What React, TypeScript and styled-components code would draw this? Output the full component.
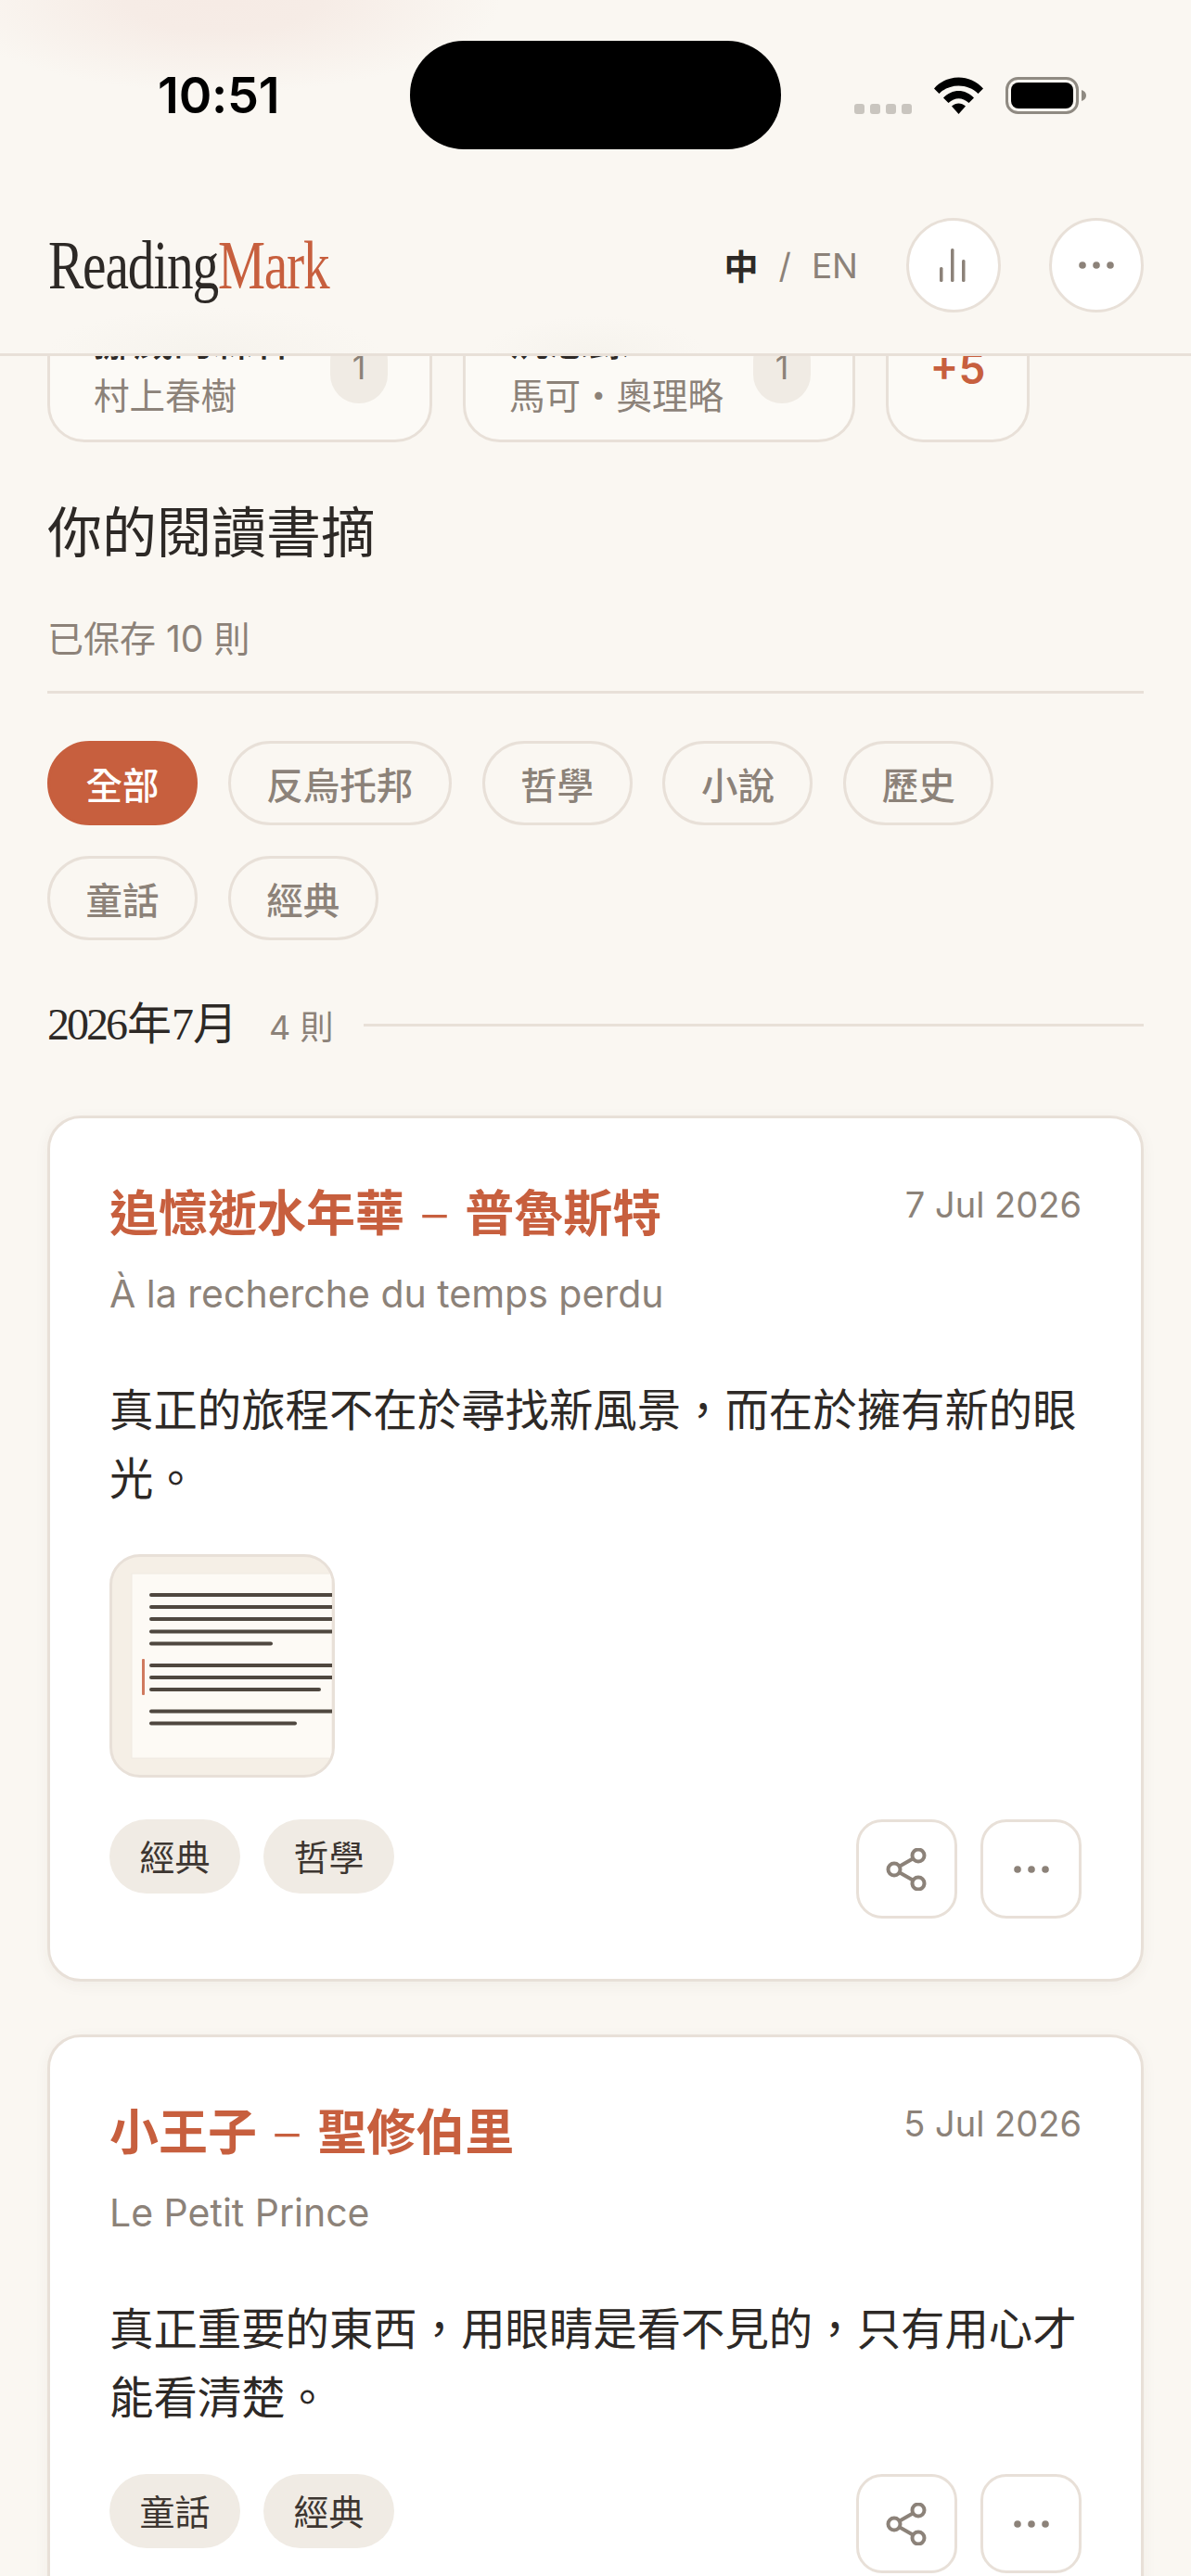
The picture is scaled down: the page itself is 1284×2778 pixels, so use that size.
import React from "react";
import styled, { createGlobalStyle } from "styled-components";

const SANS = `Inter, "Noto Sans CJK TC", "Noto Sans CJK JP", sans-serif`;
const SERIF = `"Liberation Serif", "Noto Sans CJK TC", serif`;
const INK = "#2d2926";
const MUTED = "#8c8279";
const ACCENT = "#c75f3e";
const LINE = "#e8e0d8";

const Global = createGlobalStyle`
  html, body { margin: 0; padding: 0; background: #faf7f2; }
  body { font-family: ${SANS}; color: ${INK}; }
  * { box-sizing: border-box; }
`;

const Page = styled.div`
  position: relative;
  width: 1284px;
  height: 2778px;
  overflow: hidden;
  background: #faf7f2;
`;

const Header = styled.header`
  position: absolute;
  top: 0;
  left: 0;
  right: 0;
  z-index: 2;
  height: 384px;
  padding-top: 44px;
  border-bottom: 3px solid ${LINE};
  background:
    radial-gradient(ellipse 300px 100px at 240px 0px, #f6ebe5 0%, #f6ece6 35%, rgba(246, 235, 229, 0) 100%),
    radial-gradient(ellipse 180px 50px at 230px 381px, #f6f3ed 0%, rgba(246, 243, 237, 0) 100%),
    radial-gradient(ellipse 120px 40px at 640px 381px, #f6f3ed 0%, rgba(246, 243, 237, 0) 100%),
    #faf7f2;
`;

const StatusBar = styled.div`
  display: flex;
  align-items: center;
  height: 117px;
`;

const Time = styled.div`
  width: 442px;
  padding-left: 170px;
  font-size: 54px;
  font-weight: 600;
  letter-spacing: -0.2px;
  color: #000;
`;

const Island = styled.div`
  width: 400px;
  height: 117px;
  border-radius: 58px;
  background: #000;
`;

const StatusIcons = styled.div`
  display: flex;
  align-items: center;
  gap: 24px;
  margin-left: 79px;
`;

const Signal = styled.div`
  display: flex;
  gap: 6px;
  margin-top: 30px;
`;

const SignalDot = styled.span`
  width: 11px;
  height: 11px;
  border-radius: 3px;
  background: #c9c5bf;
`;

const NavRow = styled.div`
  display: flex;
  align-items: center;
  height: 102px;
  margin-top: 74px;
  padding: 0 51px 0 52px;
`;

const Logo = styled.div`
  font-family: ${SERIF};
  font-size: 74px;
  line-height: 102px;
  letter-spacing: -1.5px;
  color: ${INK};
  white-space: nowrap;
  transform: scaleX(0.775);
  transform-origin: left center;
`;

const LogoAccent = styled.span`
  color: ${ACCENT};
`;

const NavRight = styled.div`
  display: flex;
  align-items: center;
  margin-left: auto;
`;

const Lang = styled.div`
  display: flex;
  align-items: center;
  gap: 22px;
  margin-right: 52px;
  font-size: 37px;
  color: ${MUTED};
`;

const LangActive = styled.span`
  font-weight: 700;
  color: ${INK};
`;

const RoundButton = styled.button<{ $gap?: number }>`
  display: flex;
  align-items: center;
  justify-content: center;
  width: 102px;
  height: 102px;
  margin-left: ${(p) => p.$gap ?? 0}px;
  padding: 0;
  border: 3px solid ${LINE};
  border-radius: 50%;
  background: #fff;
`;

const Main = styled.main`
  padding: 311px 51px 0;
`;

const AuthorStrip = styled.div`
  display: flex;
  gap: 33px;
`;

const AuthorCard = styled.div<{ $width: number }>`
  display: flex;
  align-items: center;
  justify-content: space-between;
  width: ${(p) => p.$width}px;
  height: 166px;
  padding: 4px 45px 0 47px;
  border: 3px solid ${LINE};
  border-radius: 40px;
  background: #fcfaf6;
`;

const AuthorText = styled.div`
  display: flex;
  flex-direction: column;
  gap: 6px;
`;

const AuthorBook = styled.div`
  font-size: 43px;
  line-height: 56px;
  font-weight: 500;
  color: ${INK};
`;

const AuthorName = styled.div`
  font-size: 38.5px;
  line-height: 50px;
  color: ${MUTED};
`;

const CountBadge = styled.div`
  display: flex;
  align-items: center;
  justify-content: center;
  width: 62px;
  height: 78px;
  border-radius: 31px;
  background: #f0ebe4;
  font-size: 36px;
  color: ${MUTED};
`;

const MoreCard = styled.div`
  display: flex;
  align-items: center;
  justify-content: center;
  width: 155px;
  height: 166px;
  padding-top: 6px;
  border: 3px solid ${LINE};
  border-radius: 40px;
  background: #fcfaf6;
  font-size: 46px;
  font-weight: 600;
  color: ${ACCENT};
`;

const PageTitle = styled.h1`
  margin: 58px 0 0;
  font-size: 59px;
  line-height: 80px;
  font-weight: 400;
  color: ${INK};
`;

const SavedCount = styled.div`
  margin-top: 49px;
  padding-bottom: 31px;
  border-bottom: 3px solid ${LINE};
  font-size: 39px;
  line-height: 50px;
  color: ${MUTED};
`;

const Filters = styled.div`
  display: flex;
  flex-wrap: wrap;
  gap: 33px 32.8px;
  margin-top: 51px;
  width: 1100px;
`;

const FilterPill = styled.button<{ $active?: boolean }>`
  height: 91px;
  padding: 0 38.5px;
  border: 3px solid ${(p) => (p.$active ? ACCENT : LINE)};
  border-radius: 46px;
  background: ${(p) => (p.$active ? ACCENT : "transparent")};
  color: ${(p) => (p.$active ? "#fff" : MUTED)};
  font-family: ${SANS};
  font-size: 39.5px;
  font-weight: 500;
`;

const MonthRow = styled.div`
  display: flex;
  align-items: center;
  height: 60px;
  margin-top: 61px;
`;

const MonthLabel = styled.div`
  font-family: ${SERIF};
  font-size: 48px;
  line-height: 60px;
  color: ${INK};
`;

const Digits = styled.span`
  letter-spacing: -3px;
  margin-right: 2px;
`;

const MonthCount = styled.div`
  margin-left: 34px;
  font-size: 36px;
  color: ${MUTED};
`;

const MonthLine = styled.div`
  flex: 1;
  height: 3px;
  margin-left: 33px;
  background: ${LINE};
`;

const NoteList = styled.div`
  display: flex;
  flex-direction: column;
  gap: 57px;
  margin-top: 68px;
`;

const NoteCard = styled.article`
  padding: 67px 64px 65px;
  border: 3px solid ${LINE};
  border-radius: 36px;
  background: #fff;
  box-shadow: 0 4px 16px rgba(70, 50, 30, 0.05);
`;

const NoteHead = styled.div`
  display: flex;
  justify-content: space-between;
  align-items: flex-start;
`;

const NoteTitle = styled.h2`
  margin: 0;
  font-size: 53px;
  line-height: 72px;
  font-weight: 600;
  color: ${ACCENT};
`;

const Dash = styled.span`
  margin: 0 6px;
  font-weight: 300;
`;

const NoteDate = styled.div`
  margin-top: -2px;
  font-size: 38px;
  line-height: 56px;
  color: ${MUTED};
`;

const NoteSub = styled.div`
  margin-top: 22px;
  font-size: 41px;
  line-height: 56px;
  color: ${MUTED};
`;

const Quote = styled.p`
  margin: 61px 0 0;
  font-size: 47.4px;
  line-height: 74px;
  color: ${INK};
`;

const Thumb = styled.div`
  width: 243px;
  height: 241px;
  margin-top: 44px;
  border: 3px solid ${LINE};
  border-radius: 33px;
  background: #f5efe6;
  overflow: hidden;
`;

const NoteFoot = styled.div<{ $gap: number }>`
  display: flex;
  justify-content: space-between;
  align-items: flex-start;
  margin-top: ${(p) => p.$gap}px;
`;

const Tags = styled.div`
  display: flex;
  gap: 25px;
`;

const Tag = styled.span`
  display: flex;
  align-items: center;
  height: 80px;
  padding: 0 32.5px 4px;
  border-radius: 40px;
  background: #f0ebe4;
  font-size: 38px;
  color: #3d3631;
`;

const Actions = styled.div`
  display: flex;
  gap: 25px;
`;

const ActionButton = styled.button`
  display: flex;
  align-items: center;
  justify-content: center;
  width: 109px;
  height: 107px;
  padding: 0;
  border: 3px solid ${LINE};
  border-radius: 28px;
  background: #fff;
`;

const Wifi = () => (
  <svg width="53" height="40" viewBox="0 0 53 40" fill="#000">
    <path d="M0 12.5C14-3.5 39-3.5 53 12.5L47.5 18C36.5 6.5 16.5 6.5 5.5 18Z" />
    <path d="M10 22.5C19.5 12.5 33.5 12.5 43 22.5L37.5 28C30.5 21.5 22.5 21.5 15.5 28Z" />
    <path d="M19 31.5C23.5 27.5 29.5 27.5 34 31.5L26.5 40Z" />
  </svg>
);

const Battery = () => (
  <svg width="87" height="40" viewBox="0 0 87 40">
    <rect x="1.5" y="1.5" width="76" height="37" rx="12" fill="none" stroke="#8f8a82" strokeWidth="3" />
    <rect x="6" y="6" width="67" height="28" rx="8" fill="#000" />
    <path d="M82 14c3 1 5 3 5 6s-2 5-5 6Z" fill="#8f8a82" />
  </svg>
);

const BarsIcon = () => (
  <svg width="30" height="36" viewBox="0 0 30 36" fill={MUTED}>
    <rect x="0" y="20" width="3.5" height="16" rx="1.5" />
    <rect x="12" y="0" width="3.5" height="36" rx="1.5" />
    <rect x="24" y="12" width="3.5" height="24" rx="1.5" />
  </svg>
);

const Dots = () => (
  <svg width="38" height="8" viewBox="0 0 38 8" fill={MUTED}>
    <circle cx="4" cy="4" r="3.8" />
    <circle cx="19" cy="4" r="3.8" />
    <circle cx="34" cy="4" r="3.8" />
  </svg>
);

const ShareIcon = () => (
  <svg width="46" height="46" viewBox="0 0 46 46" fill="none" stroke={MUTED} strokeWidth="4">
    <circle cx="35" cy="8" r="6.5" />
    <circle cx="9" cy="23" r="6.5" />
    <circle cx="35" cy="38" r="6.5" />
    <path d="M15 19.5 29 11.5M15 26.5 29 34.5" />
  </svg>
);

const PageThumb = () => {
  const lines: [number, number][] = [
    [80, 358], [93, 358], [106, 358], [119.5, 358], [132.5, 292],
    [156, 358], [169, 358], [182, 344], [205.5, 358], [218.5, 318],
  ];
  return (
    <svg width="237" height="235" viewBox="121 1679 237 235" style={{ display: "block" }}>
      <rect x="142" y="1697" width="216" height="199" fill="#fdfaf5" stroke="#f0eae2" strokeWidth="1" />
      {lines.map(([y, end]) => (
        <line key={y} x1="163" x2={end} y1={y + 1640} y2={y + 1640} stroke="#4f473f" strokeWidth="4" strokeLinecap="round" />
      ))}
      <rect x="153" y="1789" width="3" height="39" rx="1" fill="#d07a5f" />
    </svg>
  );
};

const filters = ["全部", "反烏托邦", "哲學", "小說", "歷史", "童話", "經典"];

const COMMA = "\uFF0C";
const quoteOne = `真正的旅程不在於尋找新風景${COMMA}而在於擁有新的眼光。`;
const quoteTwo = `真正重要的東西${COMMA}用眼睛是看不見的${COMMA}只有用心才能看清楚。`;

export default function App() {
  return (
    <Page>
      <Global />
      <Header>
        <StatusBar>
          <Time>10:51</Time>
          <Island />
          <StatusIcons>
            <Signal>
              <SignalDot />
              <SignalDot />
              <SignalDot />
              <SignalDot />
            </Signal>
            <Wifi />
            <Battery />
          </StatusIcons>
        </StatusBar>
        <NavRow>
          <Logo>
            Reading<LogoAccent>Mark</LogoAccent>
          </Logo>
          <NavRight>
            <Lang>
              <LangActive>中</LangActive>
              <span>/</span>
              <span>EN</span>
            </Lang>
            <RoundButton>
              <BarsIcon />
            </RoundButton>
            <RoundButton $gap={52}>
              <Dots />
            </RoundButton>
          </NavRight>
        </NavRow>
      </Header>
      <Main>
        <AuthorStrip>
          <AuthorCard $width={415}>
            <AuthorText>
              <AuthorBook>挪威的森林</AuthorBook>
              <AuthorName>村上春樹</AuthorName>
            </AuthorText>
            <CountBadge>1</CountBadge>
          </AuthorCard>
          <AuthorCard $width={423}>
            <AuthorText>
              <AuthorBook>沉思錄</AuthorBook>
              <AuthorName>馬可・奧理略</AuthorName>
            </AuthorText>
            <CountBadge>1</CountBadge>
          </AuthorCard>
          <MoreCard>+5</MoreCard>
        </AuthorStrip>
        <PageTitle>你的閱讀書摘</PageTitle>
        <SavedCount>已保存 10 則</SavedCount>
        <Filters>
          {filters.map((f, i) => (
            <FilterPill key={f} $active={i === 0}>
              {f}
            </FilterPill>
          ))}
        </Filters>
        <MonthRow>
          <MonthLabel>
            <Digits>2026</Digits>年<Digits>7</Digits>月
          </MonthLabel>
          <MonthCount>4 則</MonthCount>
          <MonthLine />
        </MonthRow>
        <NoteList>
          <NoteCard>
            <NoteHead>
              <NoteTitle>
                追憶逝水年華 <Dash>–</Dash> 普魯斯特
              </NoteTitle>
              <NoteDate>7 Jul 2026</NoteDate>
            </NoteHead>
            <NoteSub>À la recherche du temps perdu</NoteSub>
            <Quote>{quoteOne}</Quote>
            <Thumb>
              <PageThumb />
            </Thumb>
            <NoteFoot $gap={45}>
              <Tags>
                <Tag>經典</Tag>
                <Tag>哲學</Tag>
              </Tags>
              <Actions>
                <ActionButton>
                  <ShareIcon />
                </ActionButton>
                <ActionButton>
                  <Dots />
                </ActionButton>
              </Actions>
            </NoteFoot>
          </NoteCard>
          <NoteCard>
            <NoteHead>
              <NoteTitle>
                小王子 <Dash>–</Dash> 聖修伯里
              </NoteTitle>
              <NoteDate>5 Jul 2026</NoteDate>
            </NoteHead>
            <NoteSub>Le Petit Prince</NoteSub>
            <Quote>{quoteTwo}</Quote>
            <NoteFoot $gap={45}>
              <Tags>
                <Tag>童話</Tag>
                <Tag>經典</Tag>
              </Tags>
              <Actions>
                <ActionButton>
                  <ShareIcon />
                </ActionButton>
                <ActionButton>
                  <Dots />
                </ActionButton>
              </Actions>
            </NoteFoot>
          </NoteCard>
        </NoteList>
      </Main>
    </Page>
  );
}
